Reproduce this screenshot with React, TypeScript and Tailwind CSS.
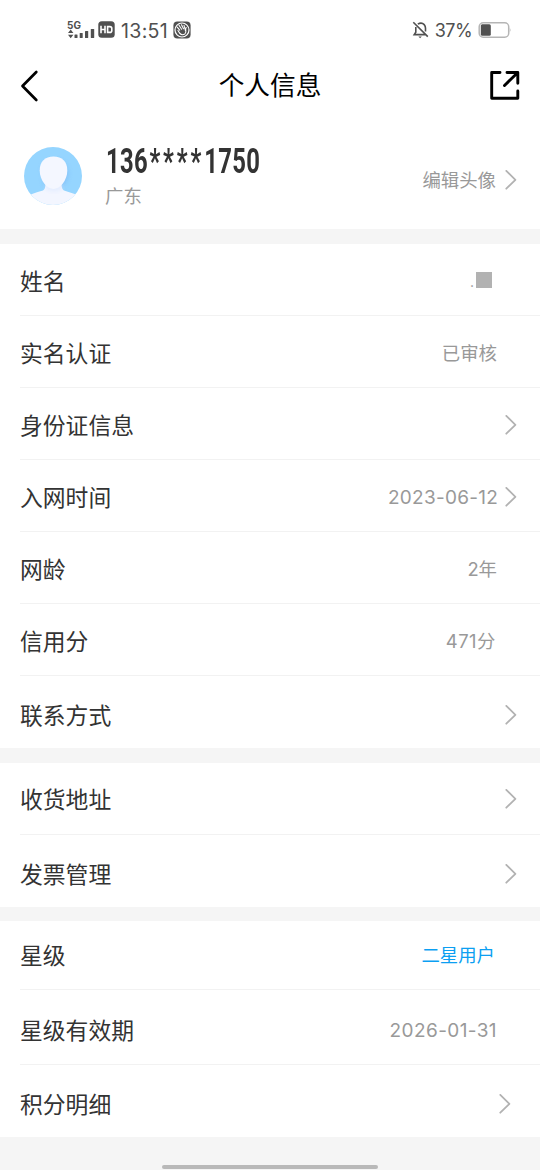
import React from 'react';
import clsx from 'clsx';

interface InfoRow {
  label: string;
  value?: string;
  masked?: boolean;
  highlight?: boolean;
  arrow?: boolean;
  valueClass?: string;
  className: string;
}

const basicRows: InfoRow[] = [
  { label: '姓名', masked: true, className: 'h-[72px] pt-[3px] pr-[22px]' },
  { label: '实名认证', value: '已审核', valueClass: 'text-[18.4px]', className: 'h-[72px] pt-[3px] pr-[22px]' },
  { label: '身份证信息', arrow: true, className: 'h-[72px] pt-[3px] pr-[22px]' },
  {
    label: '入网时间',
    value: '2023-06-12',
    arrow: true,
    valueClass: 'text-[19px] tracking-[0.25px] pt-px',
    className: 'h-[72px] pt-[3px] pr-[22px]'
  },
  { label: '网龄', value: '2年', valueClass: 'text-[18.4px]', className: 'h-[72px] pt-[3px] pr-[22px]' },
  {
    label: '信用分',
    value: '471分',
    valueClass: 'text-[18.4px] tracking-[0.5px] mr-px',
    className: 'h-[72px] pt-[3px] pr-[22px]'
  },
  { label: '联系方式', arrow: true, className: 'h-[72px] pt-[6px] pr-[22px]' }
];

const serviceRows: InfoRow[] = [
  { label: '收货地址', arrow: true, className: 'h-[72px] pt-px pr-[22px]' },
  { label: '发票管理', arrow: true, className: 'h-[72px] pt-[6px] pr-[22px]' }
];

const levelRows: InfoRow[] = [
  {
    label: '星级',
    value: '二星用户',
    highlight: true,
    valueClass: 'text-[18.4px] mr-[2px]',
    className: 'h-[69px] pr-[22px]'
  },
  {
    label: '星级有效期',
    value: '2026-01-31',
    valueClass: 'text-[19px] tracking-[0.4px] pt-px',
    className: 'h-[75px] pt-[6px] pr-[22px]'
  },
  { label: '积分明细', arrow: true, className: 'h-[72px] pt-[6px] pr-[28px]' }
];

function Chevron() {
  return (
    <svg
      width="13"
      height="20"
      viewBox="0 0 13 20"
      fill="none"
      stroke="#b2b2b2"
      strokeWidth="1.8"
      strokeLinecap="round"
      strokeLinejoin="round">

      <path d="M1.3 .9 10.4 9.8 1.3 18.7" />
    </svg>);

}

function StatusBar() {
  return (
    <div className="h-[60px] pl-[67px] pr-[28px] flex items-center justify-between text-[#505050]">
      <div className="flex items-center">
        <div className="w-7 h-5 flex flex-col">
          <span className="h-[9px] text-[10px] leading-[10px] font-bold font-['Inter',sans-serif]">5G</span>
          <svg width="28" height="11" viewBox="0 0 28 11" fill="currentColor">
            <path d="M3.7 0.6 6.4 4H1zM3.7 9.2 1 5.8h5.4z" />
            <rect x="7.5" y="5.5" width="3" height="3.5" rx=".5" />
            <rect x="12.7" y="4" width="3" height="5" rx=".5" />
            <rect x="18" y="2" width="3.2" height="7" rx=".5" />
            <rect x="23.8" y="0" width="3.4" height="9" rx=".5" />
          </svg>
        </div>
        <svg className="ml-[3px] -mt-px" width="17" height="17" viewBox="0 0 17 17">
          <rect x=".3" y=".3" width="16.4" height="16.4" rx="3.5" fill="currentColor" />
          <g fill="none" stroke="#fff" strokeWidth="1.6">
            <path d="M3 4.8v7.4M3 8.5h4M7 4.8v7.4M9.6 5.6v5.8h2.2q2 0 2-2V7.6q0-2-2-2z" />
          </g>
        </svg>
        <span className="ml-[6px] pt-px text-[19.6px] leading-5 tracking-[0.3px] font-['Inter',sans-serif]">13:51</span>
        <svg className="ml-[5px]" width="18" height="18" viewBox="0 0 18 18" fill="none">
          <rect x=".4" y=".4" width="17.2" height="17.2" rx="4" fill="currentColor" />
          <circle cx="9" cy="9" r="7" stroke="#fff" strokeWidth="1.2" />
          <path
            d="M4.2 6.2l2.5 3M6 4.2l2.6 4M8.5 3.7l2 4M11 4.3l1.2 4.4 1-2.2M5 9.5l1.5 2.5q2.8 3 5.4.8 1.5-1.5.8-4.8"
            stroke="#fff"
            strokeWidth="1.1"
            strokeLinecap="round" />

        </svg>
      </div>
      <div className="flex items-center">
        <svg width="18" height="18" viewBox="0 0 18 18" fill="none" stroke="currentColor" strokeWidth="1.6">
          <path d="M1.3 1.3 15.8 15.6M3.8 6v5.2L2.2 13.6H13M5.8 3.2Q9.5.8 12.2 3.6 13.7 5.3 13.5 8v2.5" />
          <path d="M6.4 15.6h3.4L8.1 17.2z" fill="currentColor" stroke="none" />
        </svg>
        <span className="ml-[5px] pt-[2px] text-[18px] leading-5 tracking-[-0.6px] font-['Inter',sans-serif]">37%</span>
        <svg className="ml-[6px]" width="34" height="18" viewBox="0 0 34 18">
          <rect x="1.2" y="1.8" width="29.5" height="14.4" rx="4" fill="none" stroke="#b5b5b5" strokeWidth="1.5" />
          <rect x="2.8" y="3.2" width="10" height="11.6" rx="1.5" fill="#505050" />
          <path d="M31.8 6.5q1.6 2.5 0 5z" fill="#b5b5b5" />
        </svg>
      </div>
    </div>);

}

function Avatar() {
  return (
    <svg width="58" height="58" viewBox="0 0 58 58">
      <defs>
        <clipPath id="avatar-clip">
          <circle cx="29" cy="29" r="29" />
        </clipPath>
        <filter id="avatar-shadow" x="-30%" y="-30%" width="160%" height="160%">
          <feGaussianBlur stdDeviation="2.2" />
        </filter>
      </defs>
      <g clipPath="url(#avatar-clip)">
        <rect width="58" height="58" fill="#95d5ff" />
        <path
          d="M18 20Q22 12 35 13 46 18 44 30 40 42 32 45L20 38z"
          fill="#7fb9f5"
          opacity=".6"
          filter="url(#avatar-shadow)" />

        <path d="M0 51Q8 46 19 43.5 21.5 42 21.5 37h16Q37.5 42 40 43.5 50 46 58 51v7H0z" fill="#f3f6ff" />
        <ellipse cx="30" cy="40" rx="9" ry="4" fill="#dce8ff" opacity=".7" filter="url(#avatar-shadow)" />
        <path d="M29.5 9.5C38 9.5 43.3 14.5 43.3 23.5 43.3 33.5 36 42 29.5 42S15.7 33.5 15.7 23.5C15.7 14.5 21 9.5 29.5 9.5z" fill="#f4f7ff" />
      </g>
    </svg>);

}

function Row({ row, last }: {row: InfoRow;last: boolean;}) {
  return (
    <div
      className={clsx(
        'ml-[20px] flex items-center justify-between',
        !last && 'border-b border-[#f2f2f2]',
        row.className
      )}>

      <span className="pt-px text-[22.8px] leading-8 text-[#333333]">{row.label}</span>
      <div className="flex items-center">
        {row.masked &&
        <div className="mr-[26px] flex items-end text-[#999999]">
            <span className="mr-[2px] text-sm leading-[14px] h-[15px]">.</span>
            <div className="w-4 h-4 mb-[2px] bg-[#b2b2b2]" />
          </div>
        }
        {row.value &&
        <span
          className={clsx(
            'leading-7',
            row.highlight ? 'text-[#0c9ff2]' : 'text-[#999999]',
            row.valueClass
          )}>

            <span className={clsx(!row.arrow && 'mr-[21px]')}>{row.value}</span>
          </span>
        }
        {row.arrow &&
        <div className="ml-[7px]">
            <Chevron />
          </div>
        }
      </div>
    </div>);

}

function Section({ rows }: {rows: InfoRow[];}) {
  return (
    <div className="bg-white">
      {rows.map((row, index) =>
      <Row key={row.label} row={row} last={index === rows.length - 1} />
      )}
    </div>);

}

export default function App() {
  return (
    <div className="w-[540px] h-[1170px] overflow-hidden flex flex-col bg-[#f5f5f5] font-['Inter','Noto_Sans_CJK_SC',sans-serif]">
      <div className="h-[229px] bg-white">
        <StatusBar />
        <div className="h-[51px] pl-5 pr-[19px] flex items-center justify-between">
          <svg
            width="20"
            height="32"
            viewBox="0 0 20 32"
            fill="none"
            stroke="#000"
            strokeWidth="2.7"
            strokeLinecap="round"
            strokeLinejoin="round">

            <path d="M16.3 2 2.5 16 16.3 30" />
          </svg>
          <h1 className="ml-[11px] text-[25.7px] leading-8 text-black">个人信息</h1>
          <svg
            width="32"
            height="32"
            viewBox="0 0 32 32"
            fill="none"
            stroke="#000"
            strokeWidth="2.9"
            strokeLinecap="round"
            strokeLinejoin="round">

            <path d="M11 2.5H2.7V28.3H28.8V21M18 2.5H28.8V13.3M15.5 15.5 28.3 3" />
          </svg>
        </div>
        <div className="h-[118px] pt-4 pl-6 pr-[22px] flex items-center">
          <div className="-mt-[5px]">
            <Avatar />
          </div>
          <div className="ml-6 -mt-[2px] flex-1 flex flex-col">
            <div className="h-[37px] flex origin-left scale-x-[0.69] text-[34.5px] leading-[33px] tracking-[0.5px] font-bold text-[#333333] font-['Roboto',sans-serif] whitespace-nowrap">
              <span>136</span>
              <span className="tracking-[4.2px] ml-[2px]">****</span>
              <span>1750</span>
            </div>
            <span className="-ml-px text-[18.4px] leading-7 text-[#999999]">广东</span>
          </div>
          <div className="flex items-center mt-[3px]">
            <span className="mr-[9px] text-[18.4px] leading-7 text-[#999999]">编辑头像</span>
            <Chevron />
          </div>
        </div>
      </div>
      <div className="mt-[15px]">
        <Section rows={basicRows} />
      </div>
      <div className="mt-[15px]">
        <Section rows={serviceRows} />
      </div>
      <div className="mt-[14px]">
        <Section rows={levelRows} />
      </div>
      <div className="flex-1 flex items-end justify-center">
        <div className="w-[216px] h-1 mb-[1px] rounded-full bg-[#b9b9b9]" />
      </div>
    </div>);

}
